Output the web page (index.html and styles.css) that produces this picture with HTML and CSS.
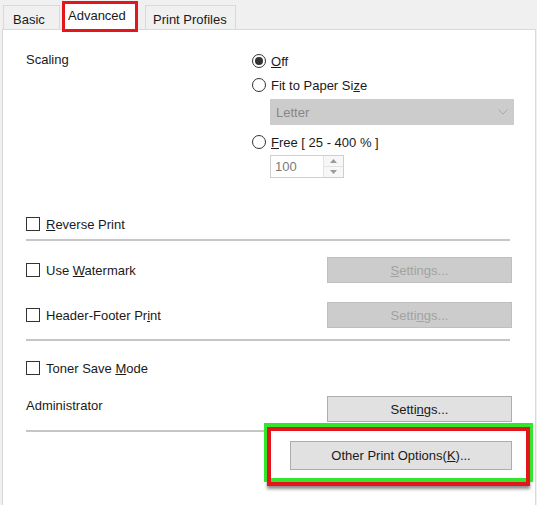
FILE: index.html
```html
<!DOCTYPE html>
<html>
<head>
<meta charset="utf-8">
<link rel="stylesheet" href="styles.css">
</head>
<body>
<div class="tabs">
  <div class="tab tab-basic">Basic</div>
  <div class="tab tab-active">Advanced</div>
  <div class="tab tab-profiles">Print Profiles</div>
</div>
<div class="panel">
  <div class="scaling">
    <div class="scaling-label">Scaling</div>
    <div class="options">
      <div class="radio-row"><span class="radio checked"></span><span><u>O</u>ff</span></div>
      <div class="radio-row r-fit"><span class="radio"></span><span>Fit to Paper Si<u>z</u>e</span></div>
      <div class="select"><span>Letter</span><svg width="10" height="6" viewBox="0 0 10 6"><path d="M0.5 0.5 L5 5 L9.5 0.5" fill="none" stroke="#a9a9a9" stroke-width="1"/></svg></div>
      <div class="radio-row r-free"><span class="radio"></span><span><u>F</u>ree [ 25 - 400 % ]</span></div>
      <div class="spin">
        <span class="spin-val">100</span>
        <span class="spin-btns">
          <span class="spin-half"><svg width="7" height="4" viewBox="0 0 7 4"><path d="M0 4 L3.5 0 L7 4 Z" fill="#9a9a9a"/></svg></span>
          <span class="spin-half spin-down"><svg width="7" height="4" viewBox="0 0 7 4"><path d="M0 0 L3.5 4 L7 0 Z" fill="#9a9a9a"/></svg></span>
        </span>
      </div>
    </div>
  </div>

  <div class="check-row reverse"><span class="check"></span><span><u>R</u>everse Print</span></div>
  <div class="sep sep1"></div>

  <div class="opt-row watermark">
    <div class="check-row"><span class="check"></span><span>Use <u>W</u>atermark</span></div>
    <button class="btn btn-disabled"><u>S</u>ettings...</button>
  </div>
  <div class="opt-row header">
    <div class="check-row"><span class="check"></span><span>Header-Footer Pr<u>i</u>nt</span></div>
    <button class="btn btn-disabled">Setti<u>n</u>gs...</button>
  </div>
  <div class="sep sep2"></div>

  <div class="check-row toner"><span class="check"></span><span>Toner Save <u>M</u>ode</span></div>
  <div class="opt-row admin">
    <div class="admin-label">Administrator</div>
    <button class="btn btn-normal">Setti<u>n</u>gs...</button>
  </div>
  <div class="sep sep3"></div>

  <div class="annot-row">
    <div class="annot">
      <button class="btn btn-normal btn-other">Other Print Options(<u>K</u>)...</button>
    </div>
  </div>
</div>
</body>
</html>
```
FILE: styles.css
```css
html, body {
  margin: 0;
  padding: 0;
}
body {
  background: #f0f0f0;
  font-family: "Liberation Sans", Arial, sans-serif;
  font-size: 13px;
  color: #1a1a1a;
  overflow: hidden;
  height: 505px;
}

/* Tabs */
.tabs {
  display: flex;
  align-items: flex-end;
  height: 29px;
  padding-left: 3px;
}
.tab {
  box-sizing: border-box;
  border: 1px solid #d9d9d9;
  border-bottom: none;
  line-height: 15px;
  background: #f0f0f0;
  white-space: nowrap;
}
.tab-basic {
  width: 57px;
  padding: 6px 0 2px 9px;
}
.tab-active {
  position: relative;
  z-index: 1;
  width: 76px;
  height: 31px;
  margin: 0 0 -3px 2px;
  border: 3px solid #e3161c;
  background: #fff;
  padding: 4px 0 0 3px;
}
.tab-profiles {
  margin-left: 7px;
  padding: 6px 8px 2px 7px;
}

/* Panel */
.panel {
  box-sizing: border-box;
  height: 476px;
  margin: 0 1px 0 2px;
  border: 1px solid #d9d9d9;
  border-bottom: none;
  background: #fff;
  padding: 21px 23px 0 23px;
}

.scaling {
  display: flex;
}
.scaling-label {
  width: 226px;
  flex: none;
  line-height: 18px;
}
.options {
  display: flex;
  flex-direction: column;
  align-items: flex-start;
}
.radio-row {
  display: flex;
  align-items: center;
  height: 20px;
  gap: 5px;
}
.radio {
  box-sizing: border-box;
  width: 14px;
  height: 14px;
  border: 1px solid #333;
  border-radius: 50%;
  display: flex;
  align-items: center;
  justify-content: center;
  background: #fff;
}
.radio.checked::after {
  content: "";
  width: 8px;
  height: 8px;
  border-radius: 50%;
  background: #333;
}
.r-fit { margin-top: 4px; }
.r-free { margin-top: 7px; }

.select {
  box-sizing: border-box;
  margin: 4px 0 0 18px;
  width: 244px;
  height: 26px;
  background: #cccccc;
  border: 1px solid #cccccc;
  display: flex;
  align-items: center;
  justify-content: space-between;
  padding: 0 5px;
  color: #878787;
}

.spin {
  box-sizing: border-box;
  margin: 3px 0 0 18px;
  width: 74px;
  height: 23px;
  border: 1px solid #cfcfcf;
  background: #fff;
  display: flex;
  justify-content: space-between;
}
.spin-val {
  padding-left: 4px;
  line-height: 21px;
  color: #7a7a7a;
}
.spin-btns {
  width: 19px;
  display: flex;
  flex-direction: column;
  border-left: 1px solid #e3e3e3;
  background: #f7f7f7;
}
.spin-half {
  flex: 1;
  display: flex;
  align-items: center;
  justify-content: center;
}
.spin-down {
  border-top: 1px solid #e3e3e3;
}

/* Checkboxes */
.check-row {
  display: flex;
  align-items: center;
  height: 20px;
  gap: 6px;
}
.check {
  box-sizing: border-box;
  width: 14px;
  height: 14px;
  border: 1px solid #333;
  background: #fff;
}
.reverse { margin-top: 36px; }
.toner { margin-top: 17px; }

.sep {
  height: 0;
  border-top: 2px solid #c6c6c6;
  margin-right: 2px;
}
.sep1 { margin-top: 5px; }
.sep2 { margin-top: 11px; }
.sep3 { margin-top: 8px; }

.opt-row {
  display: flex;
  justify-content: space-between;
  align-items: center;
  height: 26px;
}
.watermark { margin-top: 16px; }
.header { margin-top: 19px; }
.admin {
  margin-top: 18px;
  align-items: flex-start;
}
.admin-label {
  margin-top: 2px;
  line-height: 15px;
}

/* Buttons */
.btn {
  box-sizing: border-box;
  width: 185px;
  height: 26px;
  margin: 0;
  padding: 0;
  font-family: inherit;
  font-size: 13px;
  text-align: center;
}
.btn-disabled {
  background: #cccccc;
  border: 1px solid #bfbfbf;
  color: #a2a2a2;
}
.btn-normal {
  background: #e1e1e1;
  border: 1px solid #adadad;
  color: #1a1a1a;
}
.btn-other {
  width: 222px;
  height: 29px;
}

/* Annotation highlight around Other Print Options */
.annot-row {
  display: flex;
  justify-content: flex-end;
  margin: -5px -18px 0 0;
}
.annot {
  border: 4px solid #e3161c;
  padding: 10px 14px 12px 19px;
  background: #fff;
  box-shadow:
    inset 0 -4px 0 0 #33e52c,
    -3px -4px 0 0 #33e52c,
    3px -4px 0 0 #33e52c,
    0 3px 3px rgba(0, 0, 0, 0.45);
}
```
